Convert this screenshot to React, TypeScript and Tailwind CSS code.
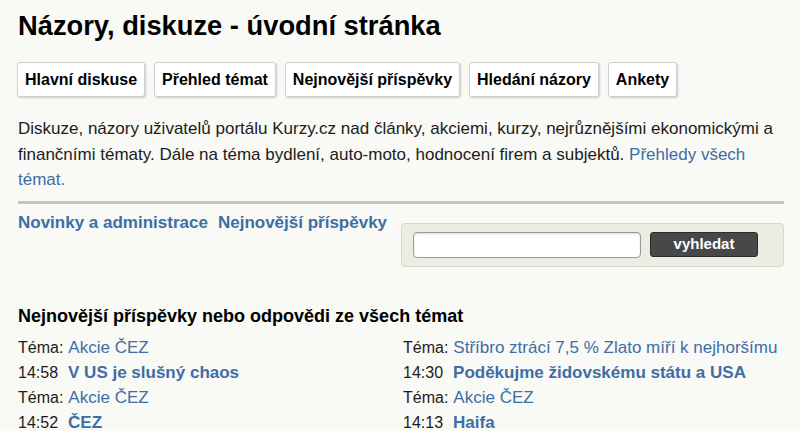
import { useState } from 'react';

const tabs = ['Hlavní diskuse', 'Přehled témat', 'Nejnovější příspěvky', 'Hledání názory', 'Ankety'];

const left = [
  { time: '14:58', topic: 'Akcie ČEZ', title: 'V US je slušný chaos' },
  { time: '14:52', topic: 'Akcie ČEZ', title: 'ČEZ' },
];

const right = [
  { time: '14:30', topic: 'Stříbro ztrácí 7,5 % Zlato míří k nejhoršímu', title: 'Poděkujme židovskému státu a USA' },
  { time: '14:13', topic: 'Akcie ČEZ', title: 'Haifa' },
];

function PostList({ items }: { items: typeof left }) {
  return (
    <div>
      {items.map((item, i) => (
        <div key={i}>
          <div className="leading-[25px] whitespace-nowrap">
            <span className="text-[16px]">Téma:</span>
            <a href="#" className="ml-[5px] text-[#3d6ea6]">{item.topic}</a>
          </div>
          <div className="leading-[25px] whitespace-nowrap">
            <span className="text-[16px]">{item.time}</span>
            <a href="#" className="ml-[10px] font-bold text-[#3d6ea6]">{item.title}</a>
          </div>
        </div>
      ))}
    </div>
  );
}

export default function App() {
  const [query, setQuery] = useState('');

  return (
    <div
      className="min-h-[431px] bg-[#f9f9f5] pl-[18px] pr-[16px] pt-[10px] text-[17px] text-[#1c1c1c]"
      style={{ fontFamily: '"Liberation Sans", Arial, sans-serif' }}
    >
      <h1 className="text-[27.3px] leading-[32px] font-bold text-black">Názory, diskuze - úvodní stránka</h1>

      {/* Tabs */}
      <div className="-ml-[1px] mt-[20px] flex gap-[9px] text-[16px]">
        {tabs.map((t) => (
          <a
            key={t}
            href="#"
            className="flex h-[35px] items-center rounded-[3px] border border-[#cfcfcf] bg-white px-[7px] font-bold text-black shadow-[1px_1px_2px_rgba(0,0,0,0.18)]"
          >
            {t}
          </a>
        ))}
      </div>

      <p className="mt-[19px] leading-[25.5px]">
        Diskuze, názory uživatelů portálu Kurzy.cz nad články, akciemi, kurzy, nejrůznějšími ekonomickými a
        finančními tématy. Dále na téma bydlení, auto-moto, hodnocení firem a subjektů.{' '}
        <a href="#" className="text-[#3d6ea6]">Přehledy všech témat.</a>
      </p>

      <div className="mt-[8px] h-[3px] w-[766px] bg-[#c4c4c4]" />

      <div className="mt-[9px] flex items-start">
        <div className="flex-1 leading-[20px] font-bold text-[#3d6ea6]">
          <a href="#">Novinky a administrace</a>
          <a href="#" className="ml-[10px]">Nejnovější příspěvky</a>
        </div>
        <div className="mt-[10px] flex h-[44px] w-[383px] items-center rounded-[4px] border border-[#d6d6c9] bg-[#ecece2] pl-[11px]">
          <input
            value={query}
            onChange={(e) => setQuery(e.target.value)}
            className="h-[26px] w-[228px] rounded-[4px] border border-[#9a9a9a] bg-white px-1 shadow-[inset_0_1px_2px_rgba(0,0,0,0.15)] outline-none"
          />
          <button className="ml-[9px] h-[25px] w-[108px] rounded-[3px] border border-[#2c2c2c] bg-[#484848] text-[15px] font-bold text-white">
            vyhledat
          </button>
        </div>
      </div>

      <h2 className="mt-[38px] text-[18px] leading-[22px] font-bold text-black">
        Nejnovější příspěvky nebo odpovědi ze všech témat
      </h2>

      <div className="mt-[8px] grid grid-cols-[385px_1fr]">
        <PostList items={left} />
        <PostList items={right} />
      </div>
    </div>
  );
}
